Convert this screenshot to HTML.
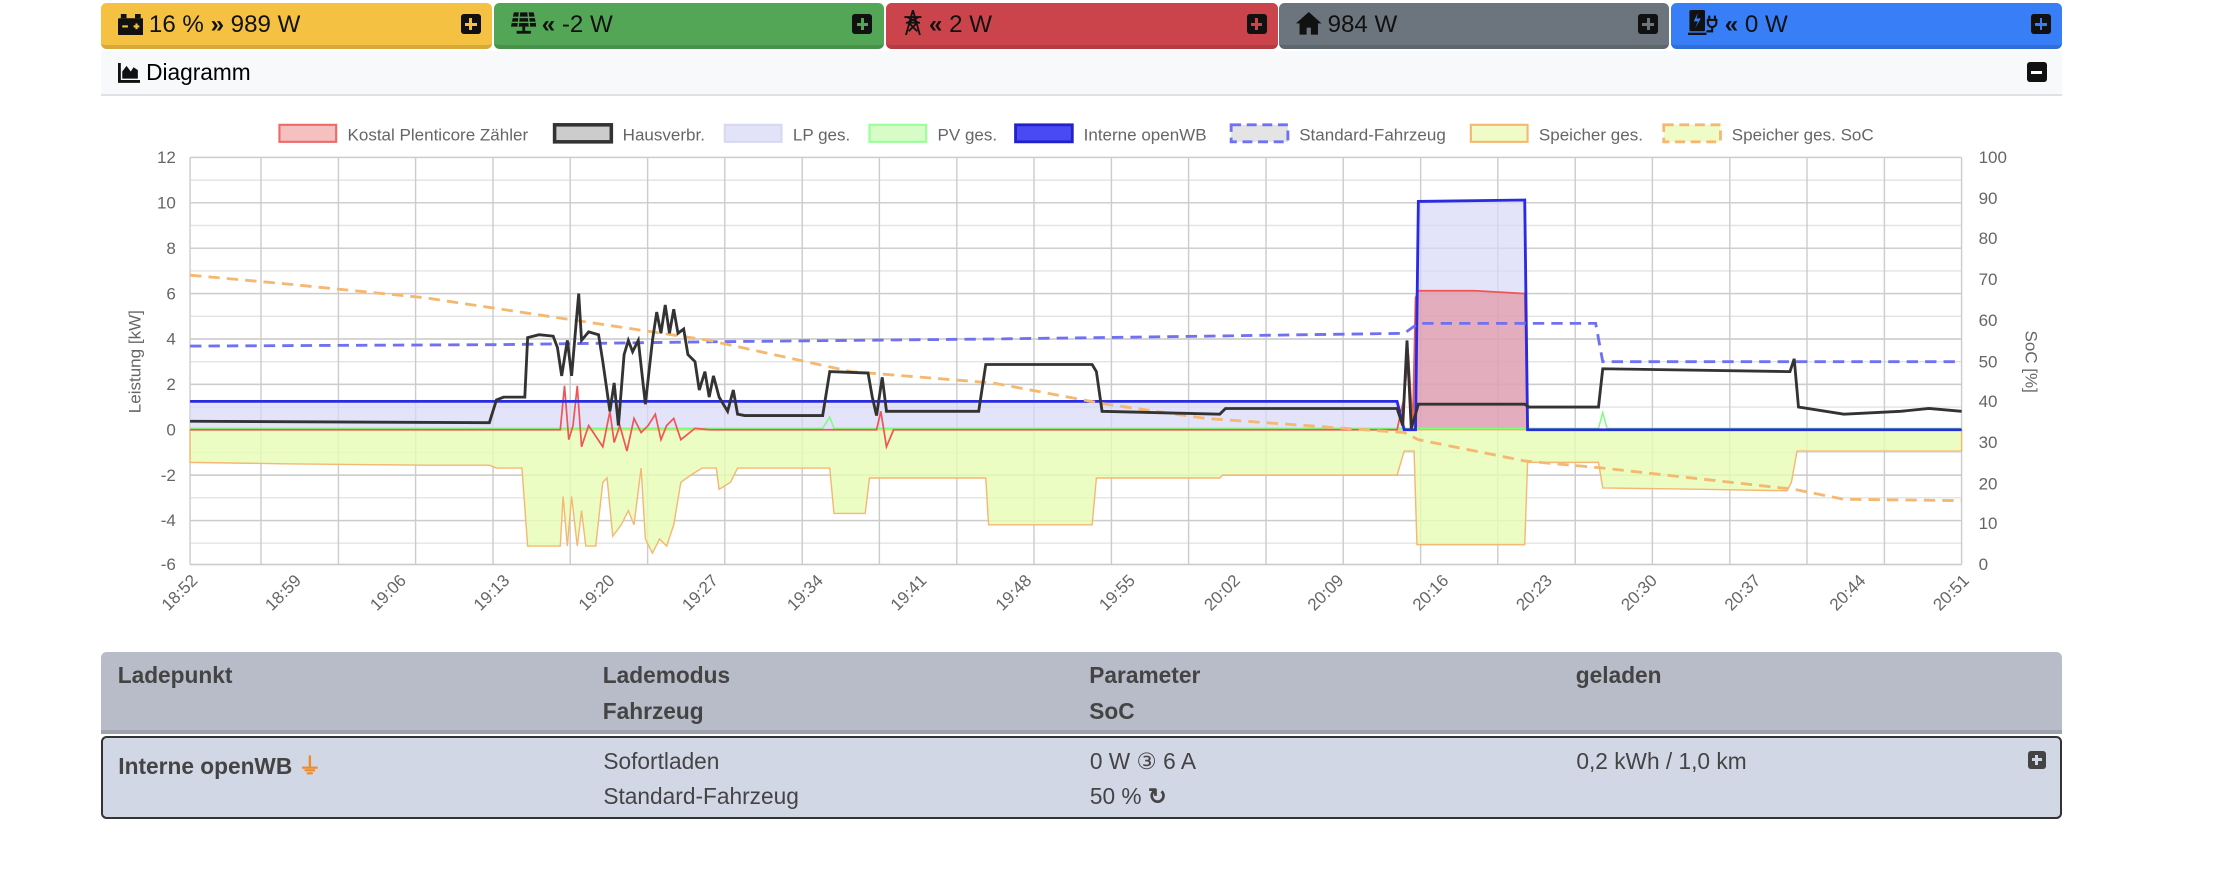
<!DOCTYPE html>
<html><head><meta charset="utf-8"><style>
html,body{margin:0;padding:0;background:#fff;overflow:hidden}
body{width:2224px;height:888px}
#w{zoom:1.41837;width:1568px;height:626px;position:relative;font-family:"Liberation Sans",sans-serif}
.card{position:absolute;top:2px;height:30px;border-radius:4px;border-bottom:3px solid rgba(0,0,0,.12);font-size:17px;color:#111;line-height:30px;box-sizing:content-box}
.card .t{position:absolute;left:12px;top:1px;white-space:nowrap}
.pl{position:absolute;right:8px;top:8px;width:14px;height:14px;background:#111;border-radius:2px}
.pl:before{content:"";position:absolute;left:3px;top:6px;width:8px;height:2px;background:var(--c)}
.pl:after{content:"";position:absolute;left:6px;top:3px;width:2px;height:8px;background:var(--c)}
.ico{display:inline-block;vertical-align:-2px;margin-right:4px}
#dh{position:absolute;left:71px;top:36px;width:1383px;height:30px;background:#f8f9fa;border-bottom:2px solid #dee2e6;font-size:16px;line-height:30px}
#tbl{position:absolute;left:71px;top:460px;width:1383px;font-size:16px;color:#444}
.th{height:55px;background:#b8bcc8;border-bottom:3px solid #9ea2ad;border-radius:4px 4px 0 0;position:relative;font-weight:bold}
.tr{height:56px;background:#d2d7e6;border:1.5px solid #333;border-radius:4px;position:relative;margin-top:1px}
.c{position:absolute;white-space:nowrap}
</style></head><body><div id="w">
<div class="card" style="left:71px;width:276px;background:#f4c142;--c:#f4c142"><span class="t"><svg class="ico" width="18" height="15" viewBox="0 0 18 15"><rect x="2" y="0" width="4" height="3" fill="#111"/><rect x="12" y="0" width="4" height="3" fill="#111"/><rect x="0" y="3" width="18" height="12" rx="1" fill="#111"/><rect x="3" y="8" width="4" height="1.5" fill="#f4c142"/><rect x="11" y="8" width="4" height="1.5" fill="#f4c142"/><rect x="12.3" y="6.7" width="1.5" height="4" fill="#f4c142"/></svg>16 % <b>»</b> 989 W</span><span class="pl"></span></div>
<div class="card" style="left:348px;width:275px;background:#53a655;--c:#53a655"><span class="t"><svg class="ico" width="18" height="17" viewBox="0 0 18 17"><path d="M2 1h14l2 10H0z" fill="#111"/><path d="M6 1l-1 10M12 1l1 10M1 4.5h16M0.6 8h16.8" stroke="#53a655" stroke-width="1"/><rect x="8" y="11" width="2" height="3" fill="#111"/><rect x="4" y="14" width="10" height="2" fill="#111"/></svg><b>«</b> -2 W</span><span class="pl"></span></div>
<div class="card" style="left:625px;width:276px;background:#cc444b;--c:#cc444b"><span class="t"><svg class="ico" width="14" height="18" viewBox="0 0 14 18"><path d="M7 0L2 18M7 0l5 18M1 5h12M2 9h10M3 5l8 4M11 5L3 9M4 9l6 6M10 9l-6 6" stroke="#111" stroke-width="1.3" fill="none"/></svg><b>«</b> 2 W</span><span class="pl"></span></div>
<div class="card" style="left:902px;width:275px;background:#6c757d;--c:#6c757d"><span class="t"><svg class="ico" width="18" height="16" viewBox="0 0 18 16"><path d="M9 0L0 8h2.5v8h5v-5h3v5h5V8H18z" fill="#111"/></svg>984 W</span><span class="pl"></span></div>
<div class="card" style="left:1178px;width:276px;background:#377ef7;--c:#377ef7"><span class="t"><svg class="ico" width="22" height="18" viewBox="0 0 22 18"><rect x="1" y="0" width="11" height="15" rx="1" fill="#111"/><rect x="0" y="16" width="13" height="2" fill="#111"/><path d="M7 2L4 8h3l-2 5 4-7H6z" fill="#377ef7"/><path d="M15 4v3M19 4v3M14 7h6v2a3 3 0 0 1-6 0zM17 12v3h-4" stroke="#111" stroke-width="1.5" fill="none"/></svg><b>«</b> 0 W</span><span class="pl"></span></div>
<div id="dh"><span style="position:absolute;left:12px"><svg class="ico" width="16" height="14" viewBox="0 0 16 14"><path d="M0 0v14h16v-2H2V0z" fill="#111"/><path d="M3 11V6l3-4 3 4 2-3 3 2v6z" fill="#111"/></svg>Diagramm</span><span style="position:absolute;right:11px;top:8px;width:14px;height:14px;background:#111;border-radius:2px"><span style="position:absolute;left:3px;top:6px;width:8px;height:2px;background:#fff"></span></span></div>
<svg style="position:absolute;left:0;top:0" width="1568" height="460" viewBox="0 0 1568 460" font-family="Liberation Sans, sans-serif">
<g font-size="12" fill="#666">
<rect x="197" y="88" width="40" height="12" fill="#f5c0c0" stroke="#ee6a6a" stroke-width="1.5"/><text x="245" y="99">Kostal Plenticore Zähler</text>
<rect x="391" y="88" width="40" height="12" fill="#ccc" stroke="#333" stroke-width="2.5"/><text x="439" y="99">Hausverbr.</text>
<rect x="511" y="88" width="40" height="12" fill="#e2e3f8" stroke="#d8d8f0" stroke-width="1.5"/><text x="559" y="99">LP ges.</text>
<rect x="613" y="88" width="40" height="12" fill="#d8fcc8" stroke="#9f9" stroke-width="1.5"/><text x="661" y="99">PV ges.</text>
<rect x="716" y="88" width="40" height="12" fill="#4a4af5" stroke="#22c" stroke-width="2"/><text x="764" y="99">Interne openWB</text>
<rect x="868" y="88" width="40" height="12" fill="#e4e4e4" stroke="#7070f0" stroke-width="2" stroke-dasharray="7,4"/><text x="916" y="99">Standard-Fahrzeug</text>
<rect x="1037" y="88" width="40" height="12" fill="#f0fcc8" stroke="#f5b870" stroke-width="1.5"/><text x="1085" y="99">Speicher ges.</text>
<rect x="1173" y="88" width="40" height="12" fill="#f0fcc8" stroke="#f5b870" stroke-width="2" stroke-dasharray="7,4"/><text x="1221" y="99">Speicher ges. SoC</text>
</g>
<g stroke="#ccc" stroke-width="1">
<path d="M134 111H1383M134 127H1383M134 143H1383M134 159H1383M134 175H1383M134 191H1383M134 207H1383M134 223H1383M134 239H1383M134 255H1383M134 271H1383M134 287H1383M134 303H1383M134 319H1383M134 335H1383M134 351H1383M134 367H1383M134 383H1383M134 398H1383" stroke="#e4e4e4"/>
<path d="M134 111H1383M134 143H1383M134 175H1383M134 207H1383M134 239H1383M134 271H1383M134 303H1383M134 335H1383M134 367H1383M134 398H1383"/>
<path d="M134 111V398M184 111V398M238.6 111V398M293 111V398M347.6 111V398M402 111V398M456.6 111V398M511 111V398M565.6 111V398M620 111V398M674.6 111V398M729 111V398M783.6 111V398M838 111V398M892.6 111V398M947 111V398M1001.6 111V398M1056 111V398M1110.6 111V398M1165 111V398M1219.6 111V398M1274 111V398M1328.6 111V398M1383 111V398"/>
</g>
<g font-size="12" fill="#666" text-anchor="end">
<text x="124" y="115">12</text><text x="124" y="147">10</text><text x="124" y="179">8</text><text x="124" y="211">6</text><text x="124" y="243">4</text><text x="124" y="275">2</text><text x="124" y="307">0</text><text x="124" y="339">-2</text><text x="124" y="371">-4</text><text x="124" y="402">-6</text>
</g>
<g font-size="12" fill="#666">
<text x="1395" y="115">100</text><text x="1395" y="144">90</text><text x="1395" y="172">80</text><text x="1395" y="201">70</text><text x="1395" y="230">60</text><text x="1395" y="259">50</text><text x="1395" y="287">40</text><text x="1395" y="316">30</text><text x="1395" y="345">20</text><text x="1395" y="373">10</text><text x="1395" y="402">0</text>
</g>
<text transform="translate(99,255) rotate(-90)" font-size="12" fill="#666" text-anchor="middle">Leistung [kW]</text>
<text transform="translate(1428,255) rotate(90)" font-size="12" fill="#666" text-anchor="middle">SoC [%]</text>
<g font-size="12" fill="#666" text-anchor="end">
<text transform="translate(140,410) rotate(-45)">18:52</text><text transform="translate(213,410) rotate(-45)">18:59</text><text transform="translate(287,410) rotate(-45)">19:06</text><text transform="translate(360,410) rotate(-45)">19:13</text><text transform="translate(434,410) rotate(-45)">19:20</text><text transform="translate(507,410) rotate(-45)">19:27</text><text transform="translate(581,410) rotate(-45)">19:34</text><text transform="translate(654,410) rotate(-45)">19:41</text><text transform="translate(728,410) rotate(-45)">19:48</text><text transform="translate(801,410) rotate(-45)">19:55</text><text transform="translate(875,410) rotate(-45)">20:02</text><text transform="translate(948,410) rotate(-45)">20:09</text><text transform="translate(1022,410) rotate(-45)">20:16</text><text transform="translate(1095,410) rotate(-45)">20:23</text><text transform="translate(1169,410) rotate(-45)">20:30</text><text transform="translate(1242,410) rotate(-45)">20:37</text><text transform="translate(1316,410) rotate(-45)">20:44</text><text transform="translate(1389,410) rotate(-45)">20:51</text>
</g>
<polygon fill="rgba(230,252,180,0.8)" stroke="#f5b870" stroke-width="1" points="134,303 134,326 200,327 300,328 345,328 350,330 368,330 372,385 395,385 397,350 400,385 403,350 407,385 410,360 413,385 420,385 425,340 428,337 432,378 438,370 443,360 447,370 452,330 455,380 460,390 465,380 470,385 475,370 480,340 487,335 495,330 505,330 507,345 515,340 520,330 580,330 585,330 588,362 610,362 613,337 690,337 695,337 697,370 770,370 773,337 860,337 862,335 985,335 990,318 997,318 999,384 1075,384 1077,326 1127,326 1130,344 1200,345 1260,346 1263,340 1267,318 1383,318 1383,303"/>
<polygon fill="rgba(215,215,248,0.7)" stroke="none" points="134,303 134,283 985,283 990,303 998,303 1000,142 1075,141 1077,303"/>
<polygon fill="rgba(230,130,140,0.55)" stroke="none" points="996,303 998,210 1000,205 1040,205 1075,207 1077,303"/>
<polyline fill="none" stroke="#7f7" stroke-width="1" points="134,302 580,302 585,294 588,302 1127,302 1130,291 1133,302 1383,302"/>
<polyline fill="none" stroke="#e55" stroke-width="1.2" points="134,303 395,303 398,272 401,310 404,300 407,272 410,315 415,300 425,315 430,290 433,312 437,300 442,318 447,295 452,305 457,300 462,292 466,310 470,300 475,295 480,310 490,302 500,303 618,303 621,290 625,315 630,303 985,303 990,280 993,250 996,300 998,210 1000,205 1040,205 1075,207 1077,303 1383,303"/>
<polyline fill="none" stroke="#2a2ae0" stroke-width="2" points="134,283 985,283 990,303 998,303 1000,142 1075,141 1077,303 1383,303"/>
<polyline fill="none" stroke="#7070f0" stroke-width="2" stroke-dasharray="8,5" points="134,244 350,243 500,241 700,239 850,237 990,235 1000,228 1125,228 1130,255 1383,255"/>
<polyline fill="none" stroke="#f5b870" stroke-width="2" stroke-dasharray="8,5" points="134,194 200,200 300,210 400,225 500,240 600,262 700,270 780,285 850,295 990,305 1000,310 1075,325 1130,330 1265,345 1300,352 1383,353"/>
<polyline fill="none" stroke="#333" stroke-width="2" points="134,297 345,298 350,282 355,280 370,280 372,238 380,236 390,237 393,245 396,265 400,240 403,265 406,230 408,207 410,240 415,234 422,236 425,255 430,290 433,270 436,300 440,250 443,240 446,248 450,240 455,285 460,240 463,220 466,235 469,215 472,235 475,218 478,235 482,232 485,250 490,255 493,275 497,262 500,280 503,265 507,280 513,290 517,275 520,292 525,293 580,293 585,262 612,263 615,280 618,293 622,266 625,290 690,290 695,257 770,257 773,262 777,290 860,292 864,288 985,288 989,300 992,240 995,302 998,292 1000,285 1075,285 1078,287 1127,287 1130,260 1262,262 1265,253 1268,287 1300,292 1340,290 1360,288 1383,290"/>
</svg>
<div id="tbl">
<div class="th"><span class="c" style="left:12px;top:7px">Ladepunkt</span><span class="c" style="left:354px;top:7px">Lademodus</span><span class="c" style="left:697px;top:7px">Parameter</span><span class="c" style="left:1040px;top:7px">geladen</span><span class="c" style="left:354px;top:32px">Fahrzeug</span><span class="c" style="left:697px;top:32px">SoC</span></div>
<div class="tr"><span class="c" style="left:11px;top:7px;font-weight:bold">Interne openWB <span style="color:#f08a24">⏚</span></span><span class="c" style="left:353px;top:7px">Sofortladen</span><span class="c" style="left:696px;top:7px">0 W ③ 6 A</span><span class="c" style="left:1039px;top:7px">0,2 kWh / 1,0 km</span><span class="c" style="left:353px;top:32px">Standard-Fahrzeug</span><span class="c" style="left:696px;top:32px">50 % <b>↻</b></span><span style="position:absolute;right:10px;top:9px;width:13px;height:13px;background:#444;border-radius:2px"><span style="position:absolute;left:3px;top:5.5px;width:7px;height:2px;background:#d2d7e6"></span><span style="position:absolute;left:5.5px;top:3px;width:2px;height:7px;background:#d2d7e6"></span></span></div>
</div>
</div></body></html>
